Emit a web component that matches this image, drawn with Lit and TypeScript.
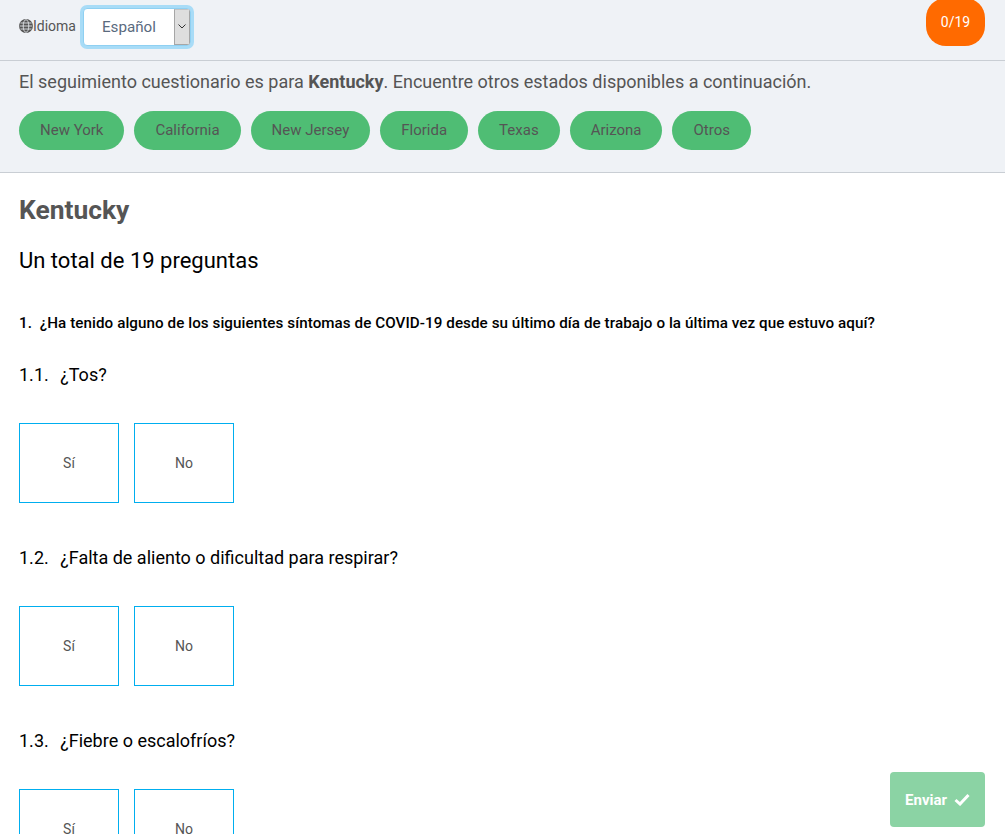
import { css, html, LitElement } from 'lit';
import { customElement } from 'lit/decorators.js';

const STATES = ['New York', 'California', 'New Jersey', 'Florida', 'Texas', 'Arizona', 'Otros'];
const SUBQUESTIONS = ['¿Tos?', '¿Falta de aliento o dificultad para respirar?', '¿Fiebre o escalofríos?'];

@customElement('app-root')
export class AppRoot extends LitElement {
  static styles = css`
    :host {
      display: block;
      height: 100vh;
      overflow: hidden;
      position: relative;
      font-family: Roboto, "Liberation Sans", sans-serif;
      color: #000;
      background: #fff;
    }

    .top {
      background: #eff2f6;
      border-bottom: 1px solid #c9ced4;
    }

    .lang-bar {
      height: 61px;
      box-sizing: border-box;
      display: flex;
      align-items: center;
      padding: 0 19px 8px;
      border-bottom: 1px solid #c9ced4;
      color: #555;
      font-size: 14px;
    }

    .lang-bar svg {
      width: 14px;
      height: 14px;
      flex: none;
    }

    .select {
      display: flex;
      box-sizing: border-box;
      width: 108px;
      height: 38px;
      margin-left: 7px;
      margin-top: 1px;
      background: #fff;
      border: 1px solid #8fd0f2;
      border-radius: 4px;
      box-shadow: 0 0 0 3px #a8dcf7;
      overflow: hidden;
    }

    .select .value {
      flex: 1;
      text-align: center;
      line-height: 36px;
      font-size: 15.200px;
      color: #5a6a7e;
    }

    .select .arrow {
      width: 16px;
      box-sizing: border-box;
      background: #dedede;
      border: 1px solid #a6a6a6;
      border-top-color: #c4c4c4;
      display: flex;
      align-items: center;
      justify-content: center;
    }

    .select .arrow svg {
      width: 8px;
      height: 5px;
    }

    .badge {
      position: absolute;
      top: -2px;
      right: 20px;
      width: 59px;
      height: 48px;
      border-radius: 20px;
      background: #ff6a00;
      color: #fff;
      font-size: 14px;
      display: flex;
      align-items: center;
      justify-content: center;
    }

    .states {
      padding: 10px 19px 22px;
    }

    .states p {
      margin: 0 0 19px;
      font-size: 18px;
      line-height: 21px;
      color: #555;
    }

    .pills {
      display: flex;
      gap: 10px;
    }

    .pill {
      height: 39px;
      padding: 0 21px;
      border-radius: 20px;
      background: #4fbd74;
      color: #555;
      font-size: 15px;
      line-height: 39px;
    }

    main {
      padding: 0 19px;
    }

    h1 {
      margin: 23px 0 0;
      font-size: 26.400px;
      line-height: 28px;
      font-weight: 700;
      color: #555;
    }

    h2 {
      margin: 24px 0 0;
      font-size: 22px;
      line-height: 26px;
      font-weight: 400;
    }

    .question {
      margin: 39px 0 0;
      font-size: 15.200px;
      line-height: 20px;
      font-weight: 500;
      letter-spacing: 0.065px;
    }

    .question span {
      margin-right: 4px;
    }

    .sub span {
      margin-right: 7px;
    }

    .sub {
      margin: 31px 0 0;
      font-size: 18px;
      line-height: 22px;
    }

    .answers {
      display: flex;
      gap: 15px;
      margin: 37px 0 44px;
    }

    .answer {
      width: 100px;
      height: 80px;
      box-sizing: border-box;
      border: 1px solid #00aeef;
      display: flex;
      align-items: center;
      justify-content: center;
      font-size: 14px;
      color: #555;
    }

    .send {
      position: absolute;
      right: 20px;
      bottom: 7px;
      width: 95px;
      height: 55px;
      border-radius: 4px;
      background: #8bd3a4;
      color: #fff;
      font-size: 15px;
      font-weight: 700;
      display: flex;
      align-items: center;
      justify-content: center;
      gap: 7px;
    }

    .send svg {
      width: 16px;
      height: 13px;
    }
  `;

  render() {
    return html`
      <div class="top">
        <div class="lang-bar">
          <svg viewBox="0 0 14 14" fill="none" stroke="#555" stroke-width="1.3">
            <circle cx="7" cy="7" r="6.300" fill="#555"></circle>
            <g stroke="#eff2f6" stroke-width="0.8">
              <ellipse cx="7" cy="7" rx="2.800" ry="6.300"></ellipse>
              <path d="M.7 7h12.600M1.500 4h11M1.500 10h11"></path>
            </g>
          </svg>
          <span>Idioma</span>
          <div class="select">
            <div class="value">Español</div>
            <div class="arrow">
              <svg viewBox="0 0 8 5" fill="none" stroke="#333" stroke-width="1"><path d="M.5.5 4 4 7.500.5"></path></svg>
            </div>
          </div>
        </div>
        <div class="badge">0/19</div>
        <div class="states">
          <p>El seguimiento cuestionario es para <b>Kentucky</b>. Encuentre otros estados disponibles a continuación.</p>
          <div class="pills">
            ${STATES.map((s) => html`<div class="pill">${s}</div>`)}
          </div>
        </div>
      </div>
      <main>
        <h1>Kentucky</h1>
        <h2>Un total de 19 preguntas</h2>
        <p class="question"><span>1.</span> ¿Ha tenido alguno de los siguientes síntomas de COVID-19 desde su último día de trabajo o la última vez que estuvo aquí?</p>
        ${SUBQUESTIONS.map(
          (q, i) => html`
            <p class="sub"><span>1.${i + 1}.</span> ${q}</p>
            <div class="answers">
              <div class="answer">Sí</div>
              <div class="answer">No</div>
            </div>
          `,
        )}
      </main>
      <div class="send">
        Enviar
        <svg viewBox="0 0 16 13" fill="none" stroke="#fff" stroke-width="3"><path d="M1.500 7 6 11 14.500 2"></path></svg>
      </div>
    `;
  }
}
